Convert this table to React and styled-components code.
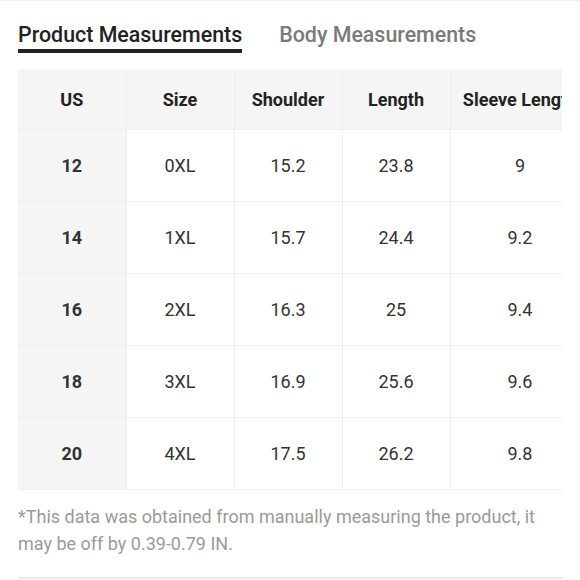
import React from "react";
import styled, { createGlobalStyle } from "styled-components";

const rows = [
  { us: "12", size: "0XL", shoulder: "15.2", length: "23.8", sleeve: "9" },
  { us: "14", size: "1XL", shoulder: "15.7", length: "24.4", sleeve: "9.2" },
  { us: "16", size: "2XL", shoulder: "16.3", length: "25", sleeve: "9.4" },
  { us: "18", size: "3XL", shoulder: "16.9", length: "25.6", sleeve: "9.6" },
  { us: "20", size: "4XL", shoulder: "17.5", length: "26.2", sleeve: "9.8" },
];

const GlobalStyle = createGlobalStyle`
  body {
    margin: 0;
    background: #fff;
    font-family: Roboto, "Liberation Sans", sans-serif;
  }
`;

export default function App() {
  return (
    <>
      <GlobalStyle />
      <Page>
        <Tabs>
          <Tab $active>Product Measurements</Tab>
          <Tab>Body Measurements</Tab>
        </Tabs>
        <TableWrap>
          <Table>
            <colgroup>
              <col style={{ width: 108 }} />
              <col style={{ width: 108 }} />
              <col style={{ width: 108 }} />
              <col style={{ width: 108 }} />
              <col style={{ width: 140 }} />
            </colgroup>
            <thead>
              <tr>
                <Th>US</Th>
                <Th>Size</Th>
                <Th>Shoulder</Th>
                <Th>Length</Th>
                <Th>Sleeve Length</Th>
              </tr>
            </thead>
            <tbody>
              {rows.map((r) => (
                <tr key={r.us}>
                  <Td $key>{r.us}</Td>
                  <Td>{r.size}</Td>
                  <Td>{r.shoulder}</Td>
                  <Td>{r.length}</Td>
                  <Td>{r.sleeve}</Td>
                </tr>
              ))}
            </tbody>
          </Table>
        </TableWrap>
        <Note>
          *This data was obtained from manually measuring the product, it may be
          off by 0.39-0.79 IN.
        </Note>
      </Page>
    </>
  );
}

const Page = styled.div`
  width: 580px;
  height: 580px;
  box-sizing: border-box;
  border-top: 1px solid #f0f0f0;
  padding: 0 18px;
  overflow: hidden;
`;

const Tabs = styled.div`
  display: flex;
  gap: 37px;
  padding-top: 21px;
`;

const Tab = styled.div`
  font-size: 21.4px;
  font-weight: 500;
  line-height: 26px;
  color: ${(p) => (p.$active ? "#222" : "#7a7a7a")};
  padding-bottom: 1px;
  border-bottom: 4px solid ${(p) => (p.$active ? "#222" : "transparent")};
`;

const TableWrap = styled.div`
  margin-top: 16px;
  width: 544px;
  overflow: hidden;
`;

const Table = styled.table`
  border-collapse: collapse;
  table-layout: fixed;
  width: 572px;
`;

const Th = styled.th`
  height: 60px;
  padding: 0;
  background: #f5f5f5;
  border: 1px solid #eeeeee;
  border-top: none;
  font-size: 18px;
  font-weight: 700;
  color: #222;
  text-align: center;
  white-space: nowrap;
  &:first-child {
    border-left: none;
  }
`;

const Td = styled.td`
  height: 71px;
  padding: 0;
  border: 1px solid #eeeeee;
  background: ${(p) => (p.$key ? "#f5f5f5" : "#fff")};
  font-size: 18px;
  font-weight: ${(p) => (p.$key ? 700 : 400)};
  color: #333;
  text-align: center;
  &:first-child {
    border-left: none;
  }
`;

const Note = styled.p`
  margin: 13px 0 0;
  padding-bottom: 20px;
  font-size: 18px;
  line-height: 27px;
  color: #9a9a9a;
  border-bottom: 2px solid #ececec;
`;
